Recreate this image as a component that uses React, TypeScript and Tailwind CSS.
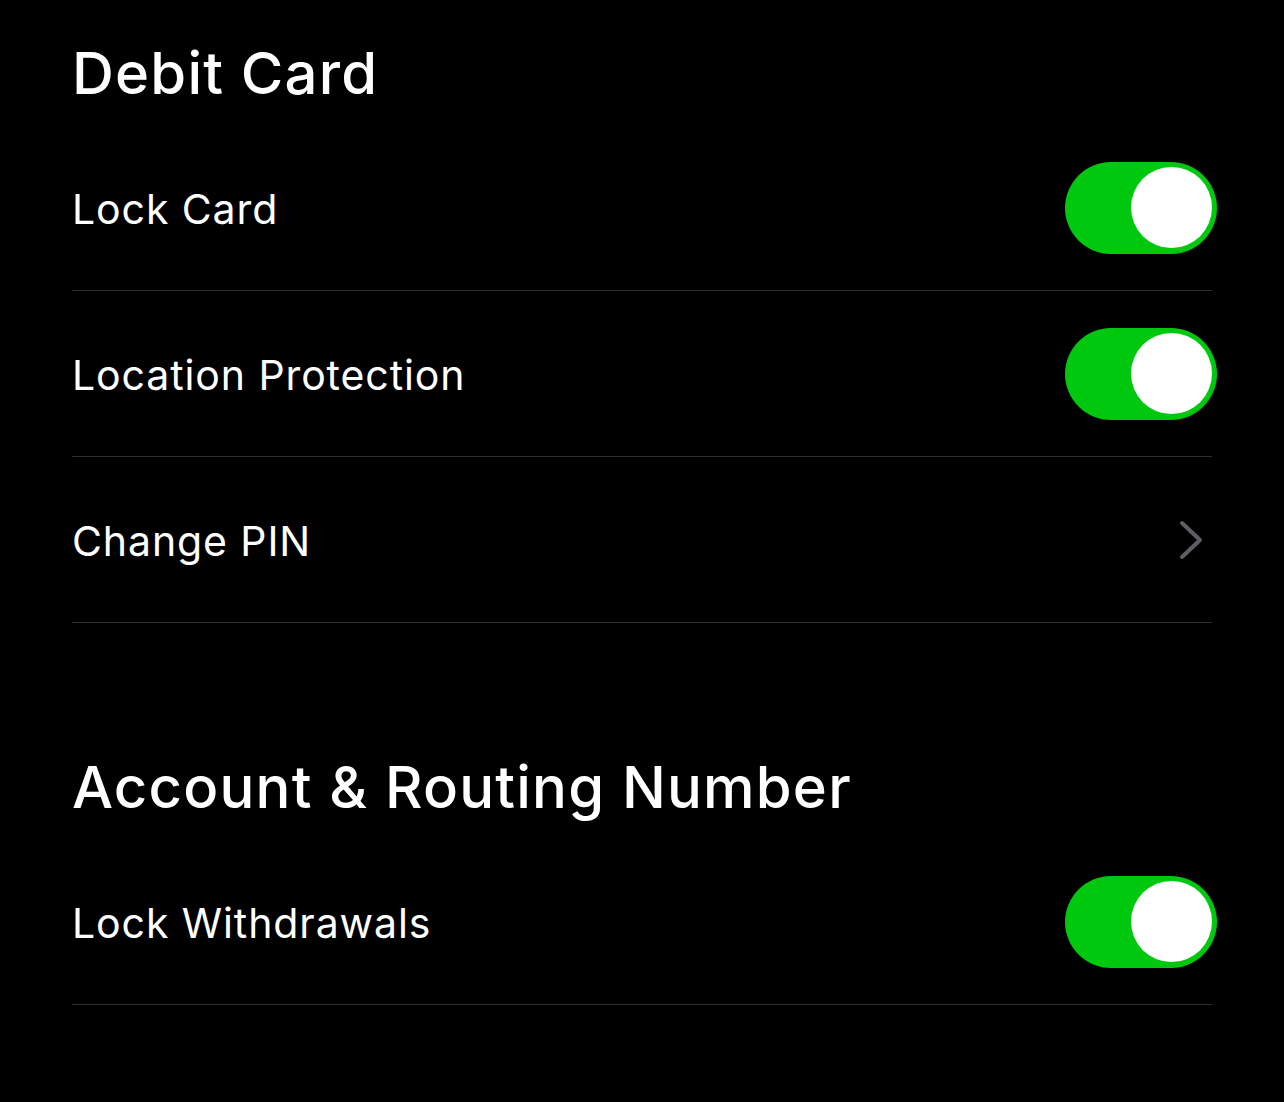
import React from "react";

function Toggle() {
  return (
    <div className="w-[152px] h-[92px] rounded-full bg-[#00c80f] flex items-center justify-end pr-[5px] shrink-0">
      <div className="w-[81px] h-[81px] rounded-full bg-white" />
    </div>
  );
}

function Chevron() {
  return (
    <svg width="40" height="40" viewBox="0 0 40 40" className="mr-[5px]">
      <path d="M10 3 L28 20 L10 37" fill="none" stroke="#5c5f64" strokeWidth="4" strokeLinecap="round" strokeLinejoin="round" />
    </svg>
  );
}

function Row({ label, right }: { label: string; right: React.ReactNode }) {
  return (
    <div className="h-[166px] border-b border-[#2e2e2e] flex items-center justify-between">
      <span className="text-[41px] text-white leading-none tracking-[0.9px] mt-[3px]">{label}</span>
      <div className="-mr-[5px]">{right}</div>
    </div>
  );
}

export default function App() {
  return (
    <div className="min-h-[1102px] bg-black pl-[72px] pr-[72px] pt-[38px]" style={{ fontFamily: "Inter, 'Noto Sans', sans-serif" }}>
      <h1 className="text-[58px] leading-[70px] text-white font-medium tracking-[1.2px]">Debit Card</h1>
      <div className="mt-[17px]">
        <Row label="Lock Card" right={<Toggle />} />
        <Row label="Location Protection" right={<Toggle />} />
        <Row label="Change PIN" right={<Chevron />} />
      </div>
      <h1 className="mt-[129px] text-[58px] leading-[70px] text-white font-medium tracking-[1.2px]">Account &amp; Routing Number</h1>
      <div className="mt-[17px]">
        <Row label="Lock Withdrawals" right={<Toggle />} />
      </div>
    </div>
  );
}
